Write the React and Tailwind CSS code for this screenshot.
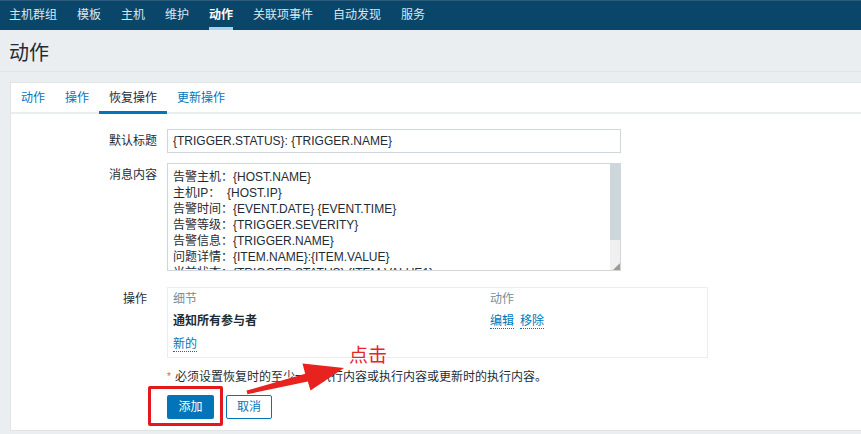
import React from "react";

const font = { fontFamily: '"Liberation Sans", Arial, "Noto Sans CJK SC", sans-serif' };

function Nav() {
  const items = ["主机群组", "模板", "主机", "维护", "动作", "关联项事件", "自动发现", "服务"];
  return (
    <div className="h-[30px] bg-[#0a466a] border-t border-[#2c5c7a] flex items-stretch pl-[9px] gap-[20px]">
      {items.map((t) => (
        <div
          key={t}
          className={
            "relative flex items-center text-[12px] leading-none pb-[1px] " +
            (t === "动作" ? "text-white font-bold" : "text-[#d9e6ee]")
          }
        >
          {t}
          {t === "动作" && <div className="absolute left-0 right-0 bottom-0 h-[3px] bg-[#a6d3f2]" />}
        </div>
      ))}
    </div>
  );
}

function Tabs() {
  const tabs = ["动作", "操作", "恢复操作", "更新操作"];
  return (
    <div className="h-[31px] flex items-stretch border-b-2 border-[#ebeef0]">
      {tabs.map((t) => (
        <div
          key={t}
          className={
            "relative px-[10px] flex items-center text-[12px] leading-none " +
            (t === "恢复操作" ? "text-[#1f2c33]" : "text-[#0275b8]")
          }
        >
          {t}
          {t === "恢复操作" && <div className="absolute left-0 right-0 -bottom-[2px] h-[3px] bg-[#0275b8]" />}
        </div>
      ))}
    </div>
  );
}

const lines = [
  "告警主机：{HOST.NAME}",
  "主机IP：  {HOST.IP}",
  "告警时间：{EVENT.DATE} {EVENT.TIME}",
  "告警等级：{TRIGGER.SEVERITY}",
  "告警信息：{TRIGGER.NAME}",
  "问题详情：{ITEM.NAME}:{ITEM.VALUE}",
  "当前状态：{TRIGGER.STATUS}:{ITEM.VALUE1}",
];

function Label({ children, extra = "" }) {
  return <div className={"text-right text-[12px] leading-[14px] pt-[5px] text-[#1f2c33] " + extra}>{children}</div>;
}

export default function App() {
  return (
    <div style={font} className="relative w-[861px] h-[434px] overflow-hidden bg-[#ebeef0] text-[#1f2c33]">
      <Nav />
      <div className="h-[42px] flex items-center pl-[9px] border-b border-[#dfe4e7]">
        <div className="text-[20px] leading-none text-[#1f2c33] pt-[4px]">动作</div>
      </div>
      <div className="mt-[10px] ml-[10px] bg-white border-l border-t border-b border-[#dfe4e7] h-[349px]">
        <Tabs />
        <div className="grid grid-cols-[146px_1fr] gap-x-[10px] pt-[15px]">
          <Label>默认标题</Label>
          <div className="w-[454px] h-[24px] border border-[#cfd7dc] flex items-center px-[5px] text-[12px] text-[#1f2c33]">
            {"{TRIGGER.STATUS}: {TRIGGER.NAME}"}
          </div>

          <Label extra="mt-[10px]">消息内容</Label>
          <div className="mt-[10px] w-[454px] h-[108px] border border-[#cfd7dc] flex overflow-hidden">
            <div className="flex-1 pl-[5px] pt-[5px] text-[12px] leading-[16px] whitespace-pre text-[#1f2c33] overflow-hidden">
              {lines.map((l) => (
                <div key={l}>{l}</div>
              ))}
            </div>
            <div className="w-[10px] bg-[#f0f0f0] flex flex-col">
              <div className="h-[76px] bg-[#cdd6db]" />
              <div className="flex-1" />
              <div className="h-[9px] text-[7px] leading-none text-[#999] flex items-end justify-end">◢</div>
            </div>
          </div>

          <Label extra="mt-[16px] pr-[10px]">操作</Label>
          <div className="mt-[16px] w-[541px] h-[71px] border border-[#ebeef0] px-[5px] pt-[4px] text-[12px]">
            <div className="grid grid-cols-[317px_1fr] gap-y-[8px] leading-[14px]">
              <div className="text-[#768d99]">细节</div>
              <div className="text-[#768d99]">动作</div>
              <div className="font-bold text-[#1f2c33]">通知所有参与者</div>
              <div className="flex gap-[6px] text-[#0275b8]">
                <span className="border-b border-dotted border-[#0275b8]">编辑</span>
                <span className="border-b border-dotted border-[#0275b8]">移除</span>
              </div>
              <div>
                <span className="text-[#0275b8] border-b border-dotted border-[#0275b8]">新的</span>
              </div>
            </div>
          </div>

          <div />
          <div className="mt-[12px] text-[12px] leading-[14px] text-[#1f2c33]">
            <span className="text-[#e45959] text-[10px] align-top mr-[4px]">*</span>
            必须设置恢复时的至少一个执行内容或执行内容或更新时的执行内容。
          </div>

          <div />
          <div className="mt-[11px] flex gap-[12px]">
            <div className="w-[47px] h-[24px] bg-[#0275b8] text-white text-[12px] flex items-center justify-center rounded-[2px]">
              添加
            </div>
            <div className="w-[46px] h-[24px] bg-white border border-[#0275b8] text-[#0275b8] text-[12px] flex items-center justify-center rounded-[2px]">
              取消
            </div>
          </div>
        </div>
      </div>

      {/* annotation overlay */}
      <div className="absolute left-[148px] top-[386px] w-[75px] h-[40px] border-[3px] border-[#e3191f] rounded-[2px] pointer-events-none" />
      <div className="absolute left-[349px] top-[344px] text-[19px] leading-none text-[#e8242a] pointer-events-none" style={{ fontFamily: '"Noto Sans CJK SC", sans-serif' }}>
        点击
      </div>
      <svg className="absolute left-0 top-0 pointer-events-none" width="861" height="434" viewBox="0 0 861 434">
        <polygon
          points="246.6,390.6 305.2,373.8 302.5,363.5 344,368 310.5,390.5 307.8,381.6 247.4,394.2"
          fill="#e8221f"
        />
      </svg>
    </div>
  );
}
